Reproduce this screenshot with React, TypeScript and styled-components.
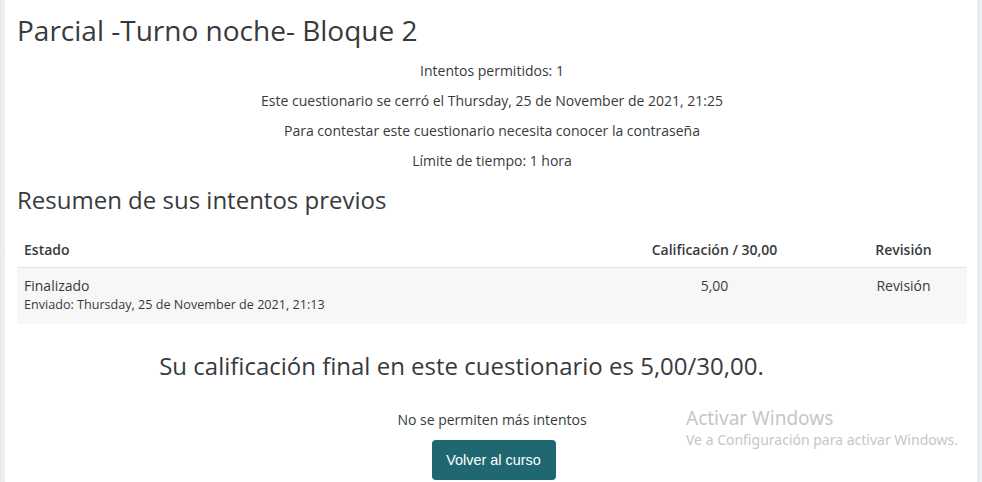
import React from "react";
import styled, { createGlobalStyle } from "styled-components";

const Global = createGlobalStyle`
  html, body { margin: 0; padding: 0; background: #fff; }
  body { font-family: "Open Sans", "Noto Sans", sans-serif; color: #373a3c; }
`;

const Page = styled.div`
  width: 982px;
  height: 482px;
  overflow: hidden;
  display: flex;
  position: relative;
  background: #fff;
`;

const SideStrip = styled.div<{ $w: number }>`
  width: ${(p) => p.$w}px;
  flex: none;
  background: linear-gradient(to right, #e8ebed, #eef0f2);
`;

const Main = styled.main`
  flex: 1;
  padding: 10px 10px 0 12px;
  display: flex;
  flex-direction: column;
`;

const Title = styled.h2`
  margin: 0;
  font-size: 28px;
  font-weight: 400;
  line-height: 40px;
`;

const InfoList = styled.div`
  display: flex;
  flex-direction: column;
  align-items: center;
  margin-top: 6px;
  font-size: 14px;
`;

const InfoLine = styled.p`
  margin: 0;
  line-height: 30px;
`;

const Section = styled.h3`
  margin: 6px 0 0 0;
  font-size: 24px;
  font-weight: 400;
  line-height: 36px;
`;

const Table = styled.div`
  margin-top: 15px;
  display: flex;
  flex-direction: column;
  font-size: 14px;
`;

const Row = styled.div<{ $head?: boolean }>`
  display: grid;
  grid-template-columns: 572px 251px 127px;
  width: 950px;
  background: ${(p) => (p.$head ? "#fff" : "#f7f7f7")};
  border-bottom: ${(p) => (p.$head ? "1px solid #dee2e6" : "none")};
  font-weight: ${(p) => (p.$head ? 600 : 400)};
  height: ${(p) => (p.$head ? 35 : 56)}px;
  box-sizing: border-box;
  padding-top: ${(p) => (p.$head ? 7 : 8)}px;
`;

const Cell = styled.div<{ $center?: boolean }>`
  padding: 0 7px;
  text-align: ${(p) => (p.$center ? "center" : "left")};
  line-height: 20px;
`;

const Sub = styled.div`
  font-size: 12.6px;
  line-height: 18px;
`;

const FinalGrade = styled.h3`
  margin: 25px 0 0 0;
  padding-right: 61px;
  text-align: center;
  font-size: 24px;
  font-weight: 400;
  line-height: 34px;
`;

const Bottom = styled.div`
  display: flex;
  flex-direction: column;
  align-items: center;
  margin-top: 27px;
`;

const Note = styled.p`
  margin: 0;
  font-size: 14px;
  line-height: 20px;
`;

const Button = styled.button`
  margin-top: 10px;
  margin-left: 3px;
  width: 124px;
  height: 40px;
  border: none;
  border-radius: 4px;
  background: #1f6872;
  color: #fff;
  font-family: "Liberation Sans", Arial, sans-serif;
  font-size: 14.4px;
`;

const Watermark = styled.div`
  position: absolute;
  left: 686px;
  top: 406px;
  color: #c6c6c6;
  font-family: "Noto Sans", "Open Sans", sans-serif;
`;

const WmTitle = styled.div`
  font-size: 19px;
  line-height: 25px;
`;

const WmSub = styled.div`
  font-size: 14px;
  line-height: 18px;
  margin-top: 0;
`;

export default function App() {
  return (
    <Page>
      <Global />
      <SideStrip $w={5} />
      <Main>
        <Title>Parcial -Turno noche- Bloque 2</Title>
        <InfoList>
          <InfoLine>Intentos permitidos: 1</InfoLine>
          <InfoLine>Este cuestionario se cerró el Thursday, 25 de November de 2021, 21:25</InfoLine>
          <InfoLine>Para contestar este cuestionario necesita conocer la contraseña</InfoLine>
          <InfoLine>Límite de tiempo: 1 hora</InfoLine>
        </InfoList>
        <Section>Resumen de sus intentos previos</Section>
        <Table>
          <Row $head>
            <Cell>Estado</Cell>
            <Cell $center>Calificación / 30,00</Cell>
            <Cell $center>Revisión</Cell>
          </Row>
          <Row>
            <Cell>
              Finalizado
              <Sub>Enviado: Thursday, 25 de November de 2021, 21:13</Sub>
            </Cell>
            <Cell $center>5,00</Cell>
            <Cell $center>Revisión</Cell>
          </Row>
        </Table>
        <FinalGrade>Su calificación final en este cuestionario es 5,00/30,00.</FinalGrade>
        <Bottom>
          <Note>No se permiten más intentos</Note>
          <Button>Volver al curso</Button>
        </Bottom>
      </Main>
      <SideStrip $w={5} />
      <Watermark>
        <WmTitle>Activar Windows</WmTitle>
        <WmSub>Ve a Configuración para activar Windows.</WmSub>
      </Watermark>
    </Page>
  );
}
